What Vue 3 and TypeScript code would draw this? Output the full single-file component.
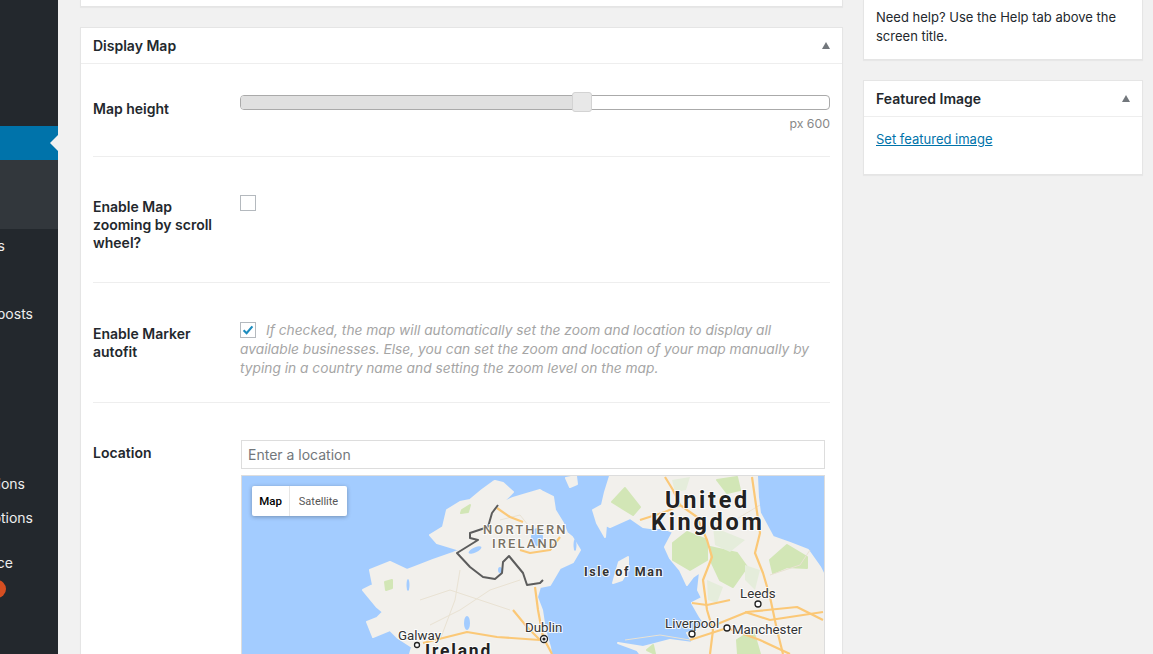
<script setup lang="ts">
import { computed, ref } from 'vue';

const menuItems = [
  { text: 'Comments', top: 'first' },
  { text: 'Boosts and posts', top: 'second' },
  { text: 'Plugin options', top: 'third' },
  { text: 'Theme options', top: 'fourth' },
  { text: 'Appearance', top: 'fifth' },
];

const mapHeight = ref(600);
const sliderWidth = computed(() => (mapHeight.value / 1035) * 100 + '%');

const irelandCoast = '495,481 503,483 513,492 507,498 499,504 513,498 523,495 540,490 543,492 553,497 555,510 563,523 567,533 572,537 580,550 573,562 560,568 550,585 540,587 537,597 542,610 545,630 550,647 552,660 552,680 410,680 410,654 412,647 398,638 390,630 373,637 367,622 377,618 383,612 377,607 363,590 373,585 370,570 390,562 407,570 415,567 433,560 453,553 460,550 437,543 430,535 443,527 447,510 460,502 470,500 482,490 493,482';
const britainCoast = '610,476 605,492 602,505 593,510 597,523 605,537 606,525 610,527 630,518 643,527 650,528 663,528 673,532 665,547 670,558 680,570 687,585 693,577 700,572 698,590 702,598 692,603 700,617 707,627 687,633 693,643 670,640 643,647 618,643 637,650 645,660 645,680 825,680 825,577 820,567 808,550 790,543 773,537 760,513 758,497 757,476';
const borderLine = '498,505 492,513 488,527 470,533 470,538 478,540 457,553 470,567 483,577 495,579 502,573 503,562 509,556 523,573 527,585 540,583 543,580';
const parks = [
  '625,488 640,507 633,515 620,507 612,502',
  '673,543 687,532 707,540 707,560 690,570 673,560',
  '710,547 737,553 747,567 733,587 720,580 712,563',
  '770,560 787,545 807,557 807,568 787,567 773,573',
  '717,480 737,477 740,490 727,493',
  '737,640 753,630 760,654 738,654',
  '647,650 653,645 655,654',
  '462,510 470,505 468,512 461,513',
  '385,582 392,580 392,588 386,590',
];
const paleParks = [
  '707,580 723,587 717,603 708,600',
  '713,527 745,540 730,552 715,545',
  '672,480 690,477 686,490 675,492',
  '745,565 760,570 755,590 745,580',
];
const mainRoads = [
  '665,477 673,490 680,505 697,517 707,540 712,557 703,580 707,610 713,630 710,654',
  '752,477 760,533 755,553 763,573 770,597 777,630 783,654',
  '692,603 707,605 730,600',
  '710,627 747,612 797,607 823,620',
  '745,612 770,620 823,612',
  '423,643 467,632 497,637 540,640',
  '513,610 527,627 540,640',
  '535,587 538,610 543,637 552,654',
  '520,550 530,553 550,550 560,537',
  '680,505 665,512 640,520',
  '690,640 727,628 760,640 790,654',
  '497,508 510,517 523,522',
];
const minorRoads = [
  '420,600 450,590 480,600 510,610',
  '430,625 460,610 490,590 520,580',
  '460,570 455,600 440,640',
  '500,520 520,515 528,525',
  '770,575 800,565 810,550',
  '735,520 760,505',
  '625,640 660,635 690,640',
];
</script>

<template>
  <div class="page">
    <aside class="adminmenu">
      <div class="menu-active"></div>
      <div class="menu-sub"></div>
      <div
        v-for="item in menuItems"
        :key="item.text"
        class="menu-item"
        :class="item.top"
      >
        <span>{{ item.text }}</span>
      </div>
      <div class="menu-bubble"></div>
    </aside>

    <main class="content">
      <div class="column-main">
        <div class="card card-top"></div>

        <section class="card">
          <header class="card-head">
            <h2>Display Map</h2>
            <i class="toggle"></i>
          </header>
          <div class="card-body">
            <div class="row row-height">
              <label class="row-label">Map height</label>
              <div class="row-field">
                <div class="slider">
                  <div class="slider-fill" :style="{ width: sliderWidth }"></div>
                  <div class="slider-handle" :style="{ left: sliderWidth }"></div>
                </div>
                <div class="slider-value">px {{ mapHeight }}</div>
              </div>
            </div>

            <div class="row row-zoom">
              <label class="row-label">Enable Map<br />zooming by scroll<br />wheel?</label>
              <div class="row-field">
                <span class="check"></span>
              </div>
            </div>

            <div class="row row-autofit">
              <label class="row-label">Enable Marker<br />autofit</label>
              <div class="row-field">
                <p class="hint">
                  <span class="check check-on">
                    <svg width="14" height="14" viewBox="0 0 14 14">
                      <path d="M2.6 7.2 5.6 10.2 11.4 3.4" fill="none" stroke="#1e8cbe" stroke-width="2.2" />
                    </svg>
                  </span>If checked, the map will automatically set the zoom and location to display all available businesses. Else, you can set the zoom and location of your map manually by typing in a country name and setting the zoom level on the map.
                </p>
              </div>
            </div>

            <div class="row row-location">
              <label class="row-label">Location</label>
              <div class="row-field">
                <input class="location" type="text" placeholder="Enter a location" />
                <div class="map">
                  <svg class="map-svg" width="583" height="190" viewBox="242 476 583 190">
                    <rect x="242" y="476" width="583" height="190" fill="#a3ccff" />
                    <g fill="#f2f0ec" stroke="#f2f0ec" stroke-width="2" stroke-linejoin="round">
                      <polygon :points="irelandCoast" />
                      <polygon :points="britainCoast" />
                      <polygon points="628,557 619,562 613,583 622,580 628,570" />
                      <polygon points="566,478 576,476 577,484 570,487" />
                    </g>
                    <!-- lakes -->
                    <g fill="#a3ccff">
                      <ellipse cx="537" cy="537" rx="6" ry="9" />
                      <ellipse cx="475" cy="550" rx="7" ry="2.5" transform="rotate(-25 475 550)" />
                      <ellipse cx="467" cy="623" rx="3" ry="7" />
                      <ellipse cx="408" cy="585" rx="1.5" ry="6" />
                      <ellipse cx="500" cy="570" rx="2" ry="3" />
                      <ellipse cx="575" cy="545" rx="1.5" ry="6" />
                    </g>
                    <g fill="#d2e6b6" stroke="#d2e6b6" stroke-width="2" stroke-linejoin="round">
                      <polygon v-for="park in parks" :key="park" :points="park" />
                    </g>
                    <g fill="#e5eddb">
                      <polygon v-for="park in paleParks" :key="park" :points="park" />
                    </g>
                    <g fill="none" stroke="#e9e2d3" stroke-width="1">
                      <polyline v-for="road in minorRoads" :key="road" :points="road" />
                    </g>
                    <g fill="none" stroke="#fbc877" stroke-width="2.2" stroke-linejoin="round">
                      <polyline v-for="road in mainRoads" :key="road" :points="road" />
                    </g>
                    <polyline :points="borderLine" fill="none" stroke="#5c5c5c" stroke-width="2" stroke-linejoin="round" />

                    <g class="label">
                      <text class="region" x="483" y="534">NORTHERN</text>
                      <text class="region" x="492" y="548">IRELAND</text>
                      <text class="country" x="665" y="508">United</text>
                      <text class="country" x="651" y="530">Kingdom</text>
                      <text class="island" x="584" y="576">Isle of Man</text>
                      <text class="city" x="740" y="598">Leeds</text>
                      <text class="city" x="665" y="628">Liverpool</text>
                      <text class="city" x="732" y="634">Manchester</text>
                      <text class="city" x="525" y="632">Dublin</text>
                      <text class="city" x="398" y="640">Galway</text>
                      <text class="ireland" x="425" y="657">Ireland</text>
                    </g>
                    <g fill="#fff" stroke="#222" stroke-width="1.3">
                      <circle cx="758" cy="604" r="3" />
                      <circle cx="692" cy="634" r="3" />
                      <circle cx="727" cy="628" r="3" />
                      <circle cx="417" cy="645" r="2.5" />
                      <circle cx="544" cy="639" r="3.5" />
                    </g>
                    <circle cx="544" cy="639" r="1.6" fill="#222" />
                  </svg>
                  <div class="map-type">
                    <span class="map-type-on">Map</span>
                    <span class="map-type-off">Satellite</span>
                  </div>
                </div>
              </div>
            </div>
          </div>
        </section>
      </div>

      <div class="column-side">
        <div class="card side-help">
          <p>Need help? Use the Help tab above the screen title.</p>
        </div>
        <section class="card side-image">
          <header class="card-head">
            <h2>Featured Image</h2>
            <i class="toggle"></i>
          </header>
          <div class="side-body">
            <a href="#" class="link">Set featured image</a>
          </div>
        </section>
      </div>
    </main>
  </div>
</template>

<style scoped>
* {
  box-sizing: border-box;
}

.page {
  display: flex;
  width: 1153px;
  height: 654px;
  overflow: hidden;
  background: #f1f1f1;
  color: #23282d;
  font-family: Inter, "Liberation Sans", sans-serif;
  font-size: 14px;
}

.adminmenu {
  position: relative;
  flex: 0 0 58px;
  width: 58px;
  min-width: 0;
  overflow: hidden;
  padding-top: 126px;
  background: #23282d;
}
.menu-active {
  height: 34px;
  background: #0073aa;
}
.menu-active::after {
  content: "";
  position: absolute;
  top: 135px;
  right: 0;
  border: 8px solid transparent;
  border-right-color: #f1f1f1;
  border-left-width: 0;
}
.menu-sub {
  height: 69px;
  background: #32373c;
}
.menu-item {
  display: flex;
  justify-content: flex-end;
  width: 58px;
  height: 18px;
  overflow: hidden;
  color: #eee;
  line-height: 18px;
  white-space: nowrap;
}
.menu-item span {
  flex: none;
}
.first {
  margin-top: 8px;
  padding-right: 53px;
}
.second {
  margin-top: 50px;
  padding-right: 25px;
}
.third {
  margin-top: 152px;
  padding-right: 33px;
}
.fourth {
  margin-top: 16px;
  padding-right: 25px;
}
.fifth {
  margin-top: 27px;
  padding-right: 45px;
}
.menu-bubble {
  width: 18px;
  height: 18px;
  margin: 8px 0 0 -12px;
  border-radius: 50%;
  background: #d54e21;
}

.content {
  display: flex;
  flex: 1;
  gap: 20px;
  min-width: 0;
  padding-left: 22px;
}
.column-main {
  flex: none;
  width: 763px;
}
.column-side {
  flex: none;
  width: 280px;
}

.card {
  border: 1px solid #e5e5e5;
  background: #fff;
  box-shadow: 0 1px 1px rgba(0, 0, 0, 0.04);
}
.card-top {
  height: 7px;
  border-top: 0;
  margin-bottom: 20px;
}
.card-head {
  display: flex;
  align-items: center;
  justify-content: space-between;
  height: 36px;
  padding: 0 12px;
  border-bottom: 1px solid #eee;
}
.card-head h2 {
  margin: 0;
  font-size: 14px;
  font-weight: 600;
  line-height: 18px;
}
.toggle {
  width: 0;
  height: 0;
  border: 4.5px solid transparent;
  border-top: 0;
  border-bottom: 7px solid #72777c;
}

.card-body {
  padding: 0 12px;
}
.row {
  display: flex;
  border-bottom: 1px solid #eee;
}
.row:last-child {
  border-bottom: 0;
}
.row-label {
  flex: 0 0 147px;
  font-weight: 600;
  line-height: 18px;
}
.row-field {
  flex: 1;
  min-width: 0;
}

.row-height {
  height: 93px;
  padding-top: 36px;
}
.row-zoom {
  height: 126px;
  padding-top: 41px;
}
.row-autofit {
  height: 120px;
  padding-top: 42px;
}
.row-location {
  padding-top: 41px;
}

.slider {
  position: relative;
  height: 15px;
  margin-top: -5px;
  border: 1px solid #aaa;
  border-radius: 4px;
  background: #fff;
}
.slider-fill {
  height: 100%;
  border-radius: 3px 0 0 3px;
  background: #e0e0e0;
}
.slider-handle {
  position: absolute;
  top: -4px;
  width: 20px;
  height: 20px;
  margin-left: -10px;
  border: 1px solid #d3d3d3;
  border-radius: 3px;
  background: #e8e8e8;
}
.slider-value {
  margin-top: 5px;
  color: #888;
  font-size: 12.3px;
  line-height: 18px;
  text-align: right;
}

.check {
  display: block;
  width: 16px;
  height: 16px;
  margin-top: -3px;
  border: 1px solid #b4b9be;
  background: #fff;
}
.check-on {
  display: inline-block;
  margin: 0 10px 0 0;
  vertical-align: -3px;
}
.check-on svg {
  display: block;
  margin: 0;
}
.hint {
  width: 590px;
  margin: -4px 0 0;
  color: #a5a5a5;
  font-size: 13.75px;
  font-style: italic;
  line-height: 19px;
}

.location {
  display: block;
  width: 584px;
  height: 29px;
  margin: -4px 0 6px 1px;
  padding: 0 6px;
  border: 1px solid #ddd;
  background: #fff;
  color: #32373c;
  font: 14px Inter, "Liberation Sans", sans-serif;
  outline: 0;
}
.location::placeholder {
  color: #72777c;
  opacity: 1;
}

.map {
  position: relative;
  width: 584px;
  height: 240px;
  margin-left: 1px;
  border: 1px solid #ddd;
  overflow: hidden;
  background: #a3ccff;
}
.map-svg {
  display: block;
}
.map-type {
  position: absolute;
  top: 10px;
  left: 10px;
  display: flex;
  height: 30px;
  border-radius: 2px;
  background: #fff;
  box-shadow: 0 1px 4px rgba(0, 0, 0, 0.3);
  font-family: Roboto, sans-serif;
  font-size: 11px;
  line-height: 31px;
}
.map-type-on {
  width: 38px;
  border-right: 1px solid #e6e6e6;
  color: #000;
  font-size: 11.5px;
  font-weight: 500;
  text-align: center;
}
.map-type-off {
  width: 57px;
  color: #565656;
  text-align: center;
}

.label text {
  font-family: Roboto, sans-serif;
  paint-order: stroke;
  stroke: rgba(255, 255, 255, 0.85);
  stroke-width: 2px;
}
.label .region {
  fill: #7a7264;
  font-size: 13px;
  font-weight: 500;
  letter-spacing: 2.1px;
}
.label .country {
  fill: #222;
  font-size: 23.5px;
  font-weight: 700;
  letter-spacing: 2.7px;
}
.label .island {
  fill: #333;
  font-size: 12.5px;
  font-weight: 700;
  letter-spacing: 1.6px;
}
.label .city {
  fill: #333;
  font-size: 13.3px;
}
.label .ireland {
  fill: #222;
  font-size: 17.5px;
  font-weight: 700;
  letter-spacing: 1.8px;
}

.side-help {
  height: 60px;
  margin-bottom: 20px;
  padding: 8px 12px 0;
  border-top: 0;
}
.side-help p {
  margin: 0;
  font-size: 13px;
  line-height: 19px;
}
.side-image {
  height: 95px;
}
.side-body {
  padding: 13px 12px;
  font-size: 13px;
  line-height: 18px;
}
.link {
  color: #0073aa;
}
</style>

<style>
body {
  background: #f1f1f1;
}
</style>
